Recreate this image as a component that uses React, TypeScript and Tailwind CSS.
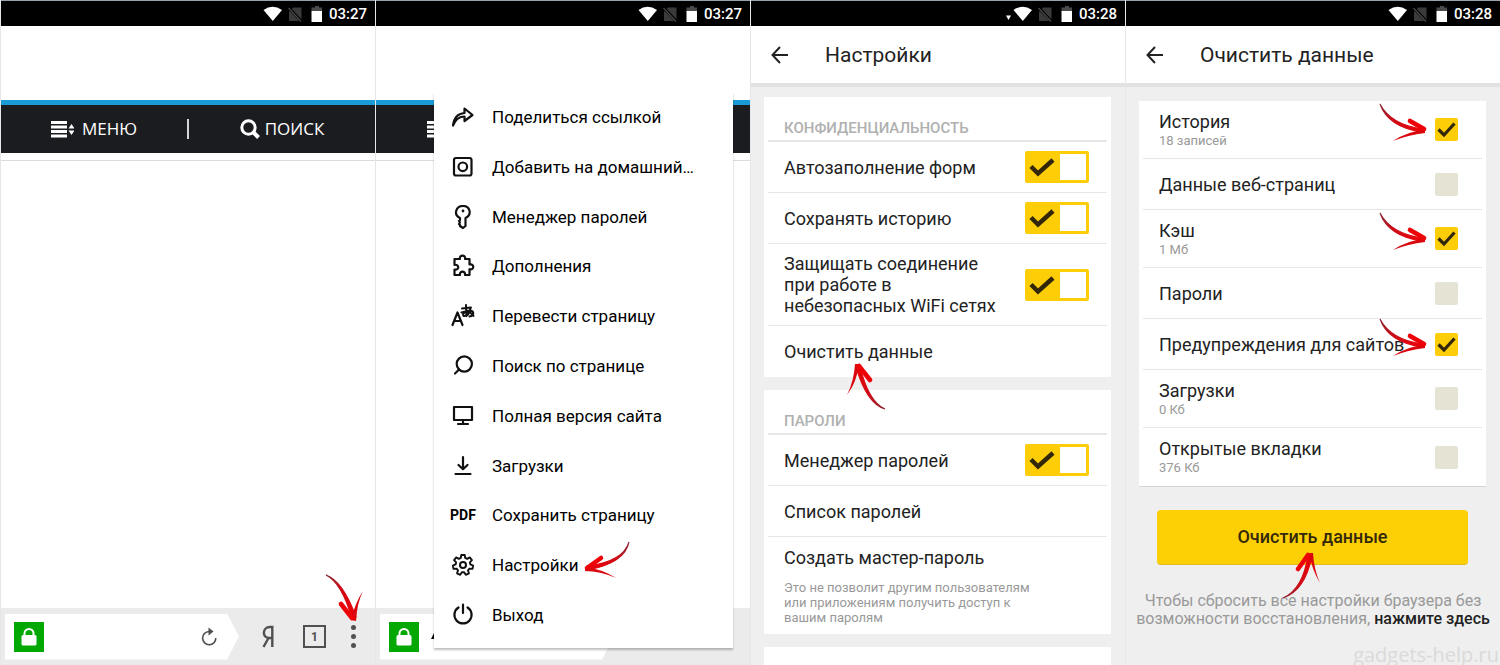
import type { ReactNode } from "react";

type ArrowKind = "down" | "left" | "up" | "right" | "upRight";

const arrows: Record<ArrowKind, { w: number; h: number; shaft: string; thick: string; thin: string; tail: [number, number]; tip: [number, number] }> = {
  down: { w: 40, h: 50, shaft: "M1 1 Q18 7 31 43 L27 45 Q17 9 1 1Z", thick: "M16 30 L27 44", thin: "M38 17 Q32 29 31 47 L26 46 Q30 29 38 17Z", tail: [1, 1], tip: [28, 47] },
  left: { w: 50, h: 40, shaft: "M47 1 Q43 22 6 29 L5 25 Q41 21 47 1Z", thick: "M19 17 L5 27", thin: "M34 37 Q18 30 3 30 L3 26 Q20 28 34 37Z", tail: [47, 1], tip: [2, 28] },
  up: { w: 42, h: 50, shaft: "M40 48 Q22 43 11 6 L15 5 Q23 40 40 48Z", thick: "M25 19 L14 5", thin: "M2 34 Q9 20 10 3 L14 3 Q12 21 2 34Z", tail: [40, 48], tip: [12, 2] },
  right: { w: 50, h: 40, shaft: "M1 1 Q9 24 43 29 L44 26 Q12 22 1 1Z", thick: "M31 18 L45 26", thin: "M14 38 Q29 32 46 30 L46 27 Q29 28 14 38Z", tail: [1, 1], tip: [48, 28] },
  upRight: { w: 40, h: 50, shaft: "M1 48 Q23 41 30 6 L26 5 Q21 39 1 48Z", thick: "M16 19 L26 5", thin: "M38 33 Q32 20 31 3 L27 3 Q30 20 38 33Z", tail: [1, 48], tip: [29, 2] },
};

function Arrow({ kind, id, className }: { kind: ArrowKind; id: string; className: string }) {
  const a = arrows[kind];
  return (
    <svg width={a.w} height={a.h} viewBox={`0 0 ${a.w} ${a.h}`} className={`pointer-events-none absolute z-20 ${className}`} aria-hidden="true">
      <defs>
        <linearGradient id={id} gradientUnits="userSpaceOnUse" x1={a.tail[0]} y1={a.tail[1]} x2={a.tip[0]} y2={a.tip[1]}>
          <stop offset="0" stopColor="#8a2a36" />
          <stop offset="0.35" stopColor="#cc0b16" />
          <stop offset="1" stopColor="#f00005" />
        </linearGradient>
      </defs>
      <path d={a.shaft} fill={`url(#${id})`} stroke={`url(#${id})`} strokeWidth="1.100" />
      <path d={a.thin} fill="#da060e" />
      <path d={a.thick} fill="none" stroke="#ec0207" strokeWidth="4.600" strokeLinecap="round" />
    </svg>
  );
}

function StatusBar({ time, extra = false }: { time: string; extra?: boolean }) {
  return (
    <div className="flex h-[26px] shrink-0 items-center justify-end gap-1 border-t border-gray-400 bg-black pr-2">
      <svg width="68" height="18" viewBox="0 0 68 18" className="mr-0.5" aria-hidden="true">
        {extra && <path d="M1 10.500h5l-2.500 4.500z" fill="#fff" />}
        <path d="M8.500 5 Q17.500 -1.500 27 5 L17.800 16z" fill="#fff" />
        <path d="M38 2.500h8.500v13.500H34V7z" fill="#3a3a3a" />
        <path d="M33 2 L47 17" stroke="#000" strokeWidth="2.800" />
        <path d="M33.500 3 L46 16.500" stroke="#4a4a4a" strokeWidth="1.200" />
        <path d="M60 1h4v1.500h3v4H56.500v-4H60z" fill="#4a4a4a" />
        <path d="M56.500 6H67v11H56.500z" fill="#fff" />
      </svg>
      <span className="text-[15px] leading-5 font-medium text-white">{time}</span>
    </div>
  );
}

function BrowserPanel({ covered = false, children }: { covered?: boolean; children?: ReactNode }) {
  return (
    <section className="relative flex min-w-0 flex-col border-l border-gray-200 bg-white">
      <StatusBar time="03:27" />
      <div className="h-[74px] shrink-0" />
      <nav className="flex h-[53px] shrink-0 items-center border-t-5 border-[#1a9ad6] bg-[#1b1c1f] font-['Open_Sans',sans-serif] text-[17px] text-white">
        <a href="#menu" aria-label="Меню сайта" className={`flex flex-1 items-center gap-2 ${covered ? "pl-[51px]" : "justify-center"}`}>
          <svg width="23" height="17" viewBox="0 0 23 17" fill="#fff" aria-hidden="true">
            <path d="M0 0h16v3H0zM0 4.500h16v3H0zM0 9h16v3H0zM0 13.500h16v3H0zM20.500 3l3 4.500h-6zM20.500 14l3-4.500h-6z" />
          </svg>
          {!covered && "МЕНЮ"}
        </a>
        <span className="h-5 w-[2px] bg-gray-300" />
        <a href="#search" aria-label="Поиск по сайту" className="flex flex-1 items-center justify-center gap-1">
          <svg width="21" height="20" viewBox="0 0 21 20" fill="none" stroke="#fff" aria-hidden="true">
            <circle cx="8.500" cy="8.500" r="6.700" strokeWidth="3" />
            <path d="M13 13l5.500 5.500" strokeWidth="4" />
          </svg>
          {!covered && "ПОИСК"}
        </a>
      </nav>
      <div className="mt-[7px] flex-1 border-t border-[#dcdcdc]" />
      <div className="flex h-[57px] shrink-0 items-center bg-[#ebebeb] pl-1">
        <div className="flex h-[46px] w-[234px] items-center justify-between bg-white pr-[21px] pl-[9px] [clip-path:polygon(0_0,222px_0,100%_50%,222px_100%,0_100%)]">
          <div className="flex items-center gap-3">
            <svg width="30" height="30" viewBox="0 0 30 30" aria-hidden="true">
              <rect width="30" height="30" fill="#04a804" />
              <path d="M10.500 15v-3.500a4.500 4.500 0 0 1 9 0V15" fill="none" stroke="#fff" strokeWidth="2" />
              <rect x="7.500" y="13" width="15" height="10.500" rx="1.500" fill="#fff" />
            </svg>
            {covered && (
              <svg width="4" height="8" viewBox="0 0 4 8" aria-hidden="true"><path d="M3 0h1v6H0z" /></svg>
            )}
          </div>
          <button type="button" aria-label="Обновить">
            <svg width="18" height="19" viewBox="0 0 18 19" fill="none" stroke="#4d4d4d" strokeWidth="1.600" aria-hidden="true">
              <path d="M11 4.500H9A6.600 6.600 0 1 0 15.800 11" />
              <path d="M8.500 0.500 L13.500 4.500 L8.500 8.500z" fill="#4d4d4d" stroke="none" />
            </svg>
          </button>
        </div>
        <div className="flex flex-1 items-center justify-end pr-3">
          <button type="button" aria-label="Яндекс" className="mr-[29px]">
            <svg width="12" height="23" viewBox="0 0 12 23" fill="none" stroke="#505050" strokeWidth="2.400" aria-hidden="true">
              <path d="M10.300 22V2H8C0 2 0 13 7 13h3M6.500 13L1.500 22" />
            </svg>
          </button>
          <button type="button" aria-label="Вкладки: 1" className="mr-[17px] flex h-[23px] w-[23px] items-center justify-center border-2 border-[#505050] text-xs font-bold text-[#505050]">1</button>
          <button type="button" aria-label="Меню" className="relative flex w-5 flex-col items-center gap-1">
            <span className="h-[5px] w-[5px] rounded-full bg-[#505050]" />
            <span className="h-[5px] w-[5px] rounded-full bg-[#505050]" />
            <span className="h-[5px] w-[5px] rounded-full bg-[#505050]" />
            {!covered && <Arrow kind="down" id="arrow-menu" className="-right-0.5 bottom-6" />}
          </button>
        </div>
      </div>
      {children}
    </section>
  );
}

function gearPath(teeth: number) {
  const points: string[] = [];
  const step = (Math.PI * 2) / teeth;
  for (let i = 0; i < teeth; i++) {
    const base = i * step - Math.PI / 2;
    for (const [offset, radius] of [[-0.33, 7.4], [-0.19, 10.2], [0.19, 10.2], [0.33, 7.4]]) {
      const angle = base + offset * step;
      points.push(`${(12 + radius * Math.cos(angle)).toFixed(2)} ${(12 + radius * Math.sin(angle)).toFixed(2)}`);
    }
  }
  return `M${points.join("L")}Z`;
}

function MenuSvg({ children }: { children: ReactNode }) {
  return (
    <svg width="24" height="24" viewBox="0 0 24 24" fill="none" stroke="#111" strokeWidth="2.200" strokeLinejoin="round" strokeLinecap="round" aria-hidden="true">
      {children}
    </svg>
  );
}

const menuItems: { label: string; icon: ReactNode }[] = [
  { label: "Поделиться ссылкой", icon: <MenuSvg><path d="M2 20.500C3 12 7 8.500 13.500 8V3.500L21.500 10l-8 6v-4.500C8 11.500 4.500 14.500 2 20.500z" /></MenuSvg> },
  { label: "Добавить на домашний…", icon: <MenuSvg><rect x="3" y="3" width="17.500" height="17.500" rx="2" /><circle cx="11.800" cy="11.800" r="4.300" /></MenuSvg> },
  { label: "Менеджер паролей", icon: <MenuSvg><path d="M9 13v2l-1 1 1 1.500-1 1.500 1 1v1l3 2 2.500-2V13c7-3.500 4.500-12-2.500-12S2 9.500 9 13z" /><circle cx="12" cy="6" r="0.800" fill="#111" strokeWidth="1.200" /></MenuSvg> },
  { label: "Дополнения", icon: <MenuSvg><path d="M3.500 5H9C7.500 .500 15.500 .500 14 5h4.500v5.500c5-1.500 5 6 0 4.700V21H14c1-4.500-6-4.500-5 0H3.500v-5.500c5 1 5-5.500 0-4.700z" /></MenuSvg> },
  { label: "Перевести страницу", icon: <MenuSvg><path d="M1.500 21L6.500 8.500l5 12.500M3 17h7" /><path d="M11 4.500l9-1M15 1l.500 11M10.500 8.500l8-2c5 0 5 5 0 6M19.500 4c-1 6-4 8-6 8s-2-3 1-4 6 1 8 4" strokeWidth="2" /></MenuSvg> },
  { label: "Поиск по странице", icon: <MenuSvg><circle cx="13.300" cy="10" r="7.600" /><path d="M8 15.500L4 19.500" /></MenuSvg> },
  { label: "Полная версия сайта", icon: <MenuSvg><path d="M3 3h18v13H3zM12 16v4M7 20h10" /></MenuSvg> },
  { label: "Загрузки", icon: <MenuSvg><path d="M12 3v11.500M7.500 11l4.500 4.200 4.500-4.200M4.500 20h15" /></MenuSvg> },
  { label: "Сохранить страницу", icon: <span className="text-sm font-bold">PDF</span> },
  { label: "Настройки", icon: <MenuSvg><path d={gearPath(7)} strokeWidth="1.900" /><circle cx="12" cy="12" r="3" strokeWidth="2" /></MenuSvg> },
  { label: "Выход", icon: <MenuSvg><path d="M7.500 4.500a8.600 8.600 0 1 0 9 0M12 1.500v8.500" /></MenuSvg> },
];

function Toggle({ label }: { label: string }) {
  return (
    <span className="relative block h-8 w-16 shrink-0">
      <input type="checkbox" defaultChecked aria-label={label} className="peer block h-8 w-16 appearance-none rounded-xs bg-[#d9d9c8] checked:bg-[#fdcd08]" />
      <span className="pointer-events-none absolute top-[3px] right-[3px] h-[26px] w-[26px] bg-white" />
      <svg width="26" height="20" viewBox="0 0 26 20" className="pointer-events-none absolute top-1.5 left-1 hidden peer-checked:block" fill="none" stroke="#33270a" strokeWidth="4.500" aria-hidden="true">
        <path d="M2 9.500l7 7L24 3" />
      </svg>
    </span>
  );
}

function SettingsRow({ label, toggle = false, arrow }: { label: string; toggle?: boolean; arrow?: ReactNode }) {
  const row = "mx-1 flex min-h-[51px] items-center justify-between border-gray-200 px-4 py-[9px] text-left text-lg leading-[21px] not-last:border-b";
  return toggle ? (
    <label className={`${row} pr-[18px]`}>
      <span className="max-w-[215px]">{label}</span>
      <Toggle label={label} />
    </label>
  ) : (
    <button type="button" className={row}>
      <span className="relative">{label}{arrow}</span>
    </button>
  );
}

function GroupTitle({ children }: { children: ReactNode }) {
  return (
    <h2 className="mx-1 flex h-[45px] items-end border-b-2 border-gray-200 px-4 pb-0.5 text-[15px] leading-5 font-medium text-[#b0b0b0]">{children}</h2>
  );
}

function Header({ title }: { title: string }) {
  return (
    <header className="flex h-[61px] shrink-0 items-center gap-9 border-b-4 border-[#e2e2e2] bg-white pl-5">
      <button type="button" aria-label="Назад">
        <svg width="18" height="18" viewBox="0 0 18 18" fill="none" stroke="#222" strokeWidth="2" aria-hidden="true">
          <path d="M17 9H2M9 1L1.500 9 9 17" />
        </svg>
      </button>
      <h1 className="text-[21px] leading-7">{title}</h1>
    </header>
  );
}

const dataRows = [
  { label: "История", sub: "18 записей", checked: true },
  { label: "Данные веб-страниц", checked: false },
  { label: "Кэш", sub: "1 Мб", checked: true },
  { label: "Пароли", checked: false },
  { label: "Предупреждения для сайтов", checked: true },
  { label: "Загрузки", sub: "0 Кб", checked: false },
  { label: "Открытые вкладки", sub: "376 Кб", checked: false },
];

export default function App() {
  return (
    <main className="grid min-h-screen grid-cols-4 overflow-hidden bg-white font-[Roboto,sans-serif] text-[#222]">
      <BrowserPanel />

      <BrowserPanel covered>
        <div className="absolute top-[92px] right-[17px] bottom-[17px] left-[58px] z-10 flex flex-col bg-white pb-2 shadow-[0_2px_2px_rgba(0,0,0,0.25)]">
          {menuItems.map((item) => (
            <button key={item.label} type="button" className="flex flex-1 items-center gap-4 pl-4 text-[17px] leading-6 whitespace-nowrap text-black">
              <span className="flex w-[26px] justify-center">{item.icon}</span>
              <span className="relative">
                {item.label}
                {item.label === "Настройки" && <Arrow kind="left" id="arrow-settings" className="-top-3 left-[90px]" />}
              </span>
            </button>
          ))}
        </div>
      </BrowserPanel>

      <section className="flex min-w-0 flex-col border-l border-gray-200 bg-[#efefef]">
        <StatusBar time="03:28" extra />
        <Header title="Настройки" />
        <div className="flex flex-1 flex-col gap-[13px] pt-[10px] pr-[14px] pl-[13px]">
          <div className="flex flex-col bg-white">
            <GroupTitle>КОНФИДЕНЦИАЛЬНОСТЬ</GroupTitle>
            <SettingsRow label="Автозаполнение форм" toggle />
            <SettingsRow label="Сохранять историю" toggle />
            <SettingsRow label="Защищать соединение при работе в небезопасных WiFi сетях" toggle />
            <SettingsRow label="Очистить данные" arrow={<Arrow kind="up" id="arrow-clear" className="top-5 left-[61px]" />} />
          </div>
          <div className="flex flex-col bg-white">
            <GroupTitle>ПАРОЛИ</GroupTitle>
            <SettingsRow label="Менеджер паролей" toggle />
            <SettingsRow label="Список паролей" />
            <button type="button" className="mx-1 px-4 pt-[10px] pb-[9px] text-left text-lg leading-[21px]">
              Создать мастер-пароль
              <span className="mt-3 block max-w-[250px] text-[13px] leading-[15px] text-[#999]">
                Это не позволит другим пользователям или приложениям получить доступ к вашим паролям
              </span>
            </button>
          </div>
          <div className="flex-1 bg-white" />
        </div>
      </section>

      <section className="relative flex min-w-0 flex-col overflow-hidden border-l border-gray-200 bg-[#efefef]">
        <StatusBar time="03:28" />
        <Header title="Очистить данные" />
        <div className="mt-[14px] mr-[14px] ml-[13px] flex flex-col border-b border-gray-300 bg-white">
          {dataRows.map((row, i) => (
            <label key={row.label} className={`mx-1 flex items-center justify-between border-gray-200 pr-6 pl-4 not-last:border-b ${row.sub ? "h-[58px]" : "h-[51px]"}`}>
              <span className="text-lg leading-[21px] whitespace-nowrap">
                {row.label}
                {row.sub && <span className="block text-[13px] leading-[17px] text-[#999]">{row.sub}</span>}
              </span>
              <span className="relative block">
                <input type="checkbox" defaultChecked={row.checked} className="peer block h-[23px] w-[23px] appearance-none rounded-xs bg-[#e5e4d4] checked:bg-[#fdcd08]" />
                <svg width="19" height="16" viewBox="0 0 19 16" className="pointer-events-none absolute top-1 left-0.5 hidden peer-checked:block" fill="none" stroke="#33270a" strokeWidth="3.200" aria-hidden="true">
                  <path d="M1.500 7.500l5.500 5.500L17.500 1.500" />
                </svg>
                {row.checked && <Arrow kind="right" id={`arrow-row-${i}`} className="right-[29px] -bottom-0.5" />}
              </span>
            </label>
          ))}
        </div>
        <button type="button" className="relative mt-[23px] mr-8 ml-[31px] h-[55px] rounded-sm border-b border-[#e2bb20] bg-[#fdd005] text-lg font-medium text-[#33280a]">
          Очистить данные
          <Arrow kind="upRight" id="arrow-button" className="top-10 left-[125px]" />
        </button>
        <p className="mt-[27px] text-center text-base leading-[18px] whitespace-nowrap text-[#999]">
          Чтобы сбросить все настройки браузера без
          <br />
          возможности восстановления, <a href="#reset" className="font-medium text-[#222]">нажмите здесь</a>
        </p>
        <span className="mt-auto self-end pr-px font-['Open_Sans',sans-serif] text-xl leading-5 text-[#dadada]">gadgets-help.ru</span>
      </section>
    </main>
  );
}
